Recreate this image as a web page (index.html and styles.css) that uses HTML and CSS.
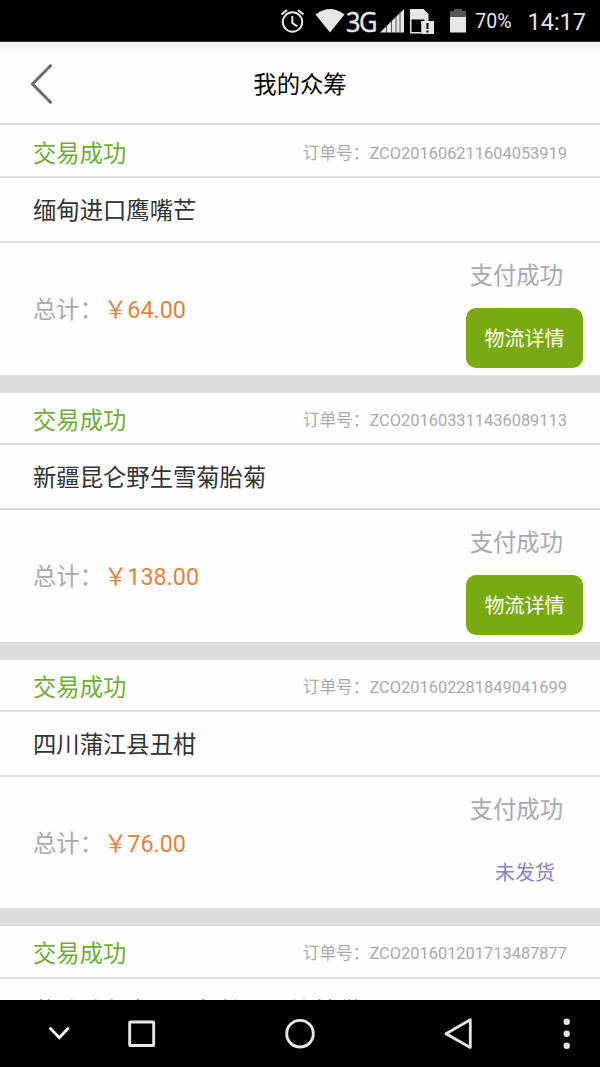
FILE: index.html
```html
<!DOCTYPE html>
<html lang="zh-CN">
<head>
<meta charset="utf-8">
<title>我的众筹</title>
<link rel="stylesheet" href="styles.css">
</head>
<body>
<div class="screen">
  <div class="status-bar">
    <svg class="status-icons" width="200" height="42" viewBox="270 0 200 42">
      <g fill="none" stroke="#e6e6e6" stroke-width="2">
        <circle cx="292.5" cy="22" r="9.7"/>
        <path d="M292.3 16v7l5 3.3"/>
        <path d="M281.5 14.5l5.5-4.5M303.5 14.5l-5.5-4.5" stroke-width="2.2"/>
      </g>
      <path d="M315.5 14.5Q330 3.500 344.500 14.500L330 32.500Z" fill="#e6e6e6"/>
      <path d="M380 32.500L404 9V32.500Z" fill="#e6e6e6"/>
      <path d="M386.500 24v9M391.500 20v13M396 15v18M400 11v22" stroke="#333" stroke-width=".8"/>
      <path d="M410 9h13.500l5 5v10h-7v9.500H410Z" fill="#e6e6e6"/>
      <path d="M411.500 19.500h13v2h-3.500v10.500h-9.500Z" fill="#000"/>
      <path d="M421.500 21h12.500v13h-12.500Z" fill="#e6e6e6"/>
      <path d="M427.500 23v6M427.500 30.500v2" stroke="#000" stroke-width="2"/>
      <path d="M454 9h8v2h4v6h-16v-6h4Z" fill="#555"/>
      <path d="M450 17h16v15.500h-16Z" fill="#e6e6e6"/>
    </svg>
    <span class="network">3G</span>
    <span class="battery">70%</span>
    <span class="clock">14:17</span>
  </div>

  <header class="title-bar">
    <svg class="back" width="24" height="42" viewBox="0 0 24 42"><path d="M20.500 2.700L2.500 21L20.500 39.300" fill="none" stroke="#6b6b6b" stroke-width="3" stroke-linecap="round"/></svg>
    <h1>我的众筹</h1>
  </header>

  <main class="orders">
    <section class="order">
      <div class="order-head"><span class="state">交易成功</span><span class="number">订单号：<b>ZCO201606211604053919</b></span></div>
      <div class="product">缅甸进口鹰嘴芒</div>
      <div class="summary">
        <div class="total">总计：<span class="price"><i>￥</i>64.00</span></div>
        <div class="payment"><span class="paid">支付成功</span><a class="button">物流详情</a></div>
      </div>
    </section>
    <section class="order">
      <div class="order-head"><span class="state">交易成功</span><span class="number">订单号：<b>ZCO201603311436089113</b></span></div>
      <div class="product">新疆昆仑野生雪菊胎菊</div>
      <div class="summary">
        <div class="total">总计：<span class="price"><i>￥</i>138.00</span></div>
        <div class="payment"><span class="paid">支付成功</span><a class="button">物流详情</a></div>
      </div>
    </section>
    <section class="order">
      <div class="order-head"><span class="state">交易成功</span><span class="number">订单号：<b>ZCO201602281849041699</b></span></div>
      <div class="product">四川蒲江县丑柑</div>
      <div class="summary">
        <div class="total">总计：<span class="price"><i>￥</i>76.00</span></div>
        <div class="payment"><span class="paid">支付成功</span><span class="unsent">未发货</span></div>
      </div>
    </section>
    <section class="order">
      <div class="order-head"><span class="state">交易成功</span><span class="number">订单号：<b>ZCO201601201713487877</b></span></div>
      <div class="product">花雕醉鱼来一百年特价厚块甘甜</div>
    </section>
  </main>

  <nav class="nav-bar">
    <svg width="600" height="67" viewBox="0 1000 600 67" fill="none" stroke="#e6e6e6">
      <path d="M50.500 1028.500L59.300 1037.800L68 1028.500" stroke="#fff" stroke-width="2.800" stroke-linecap="round"/>
      <rect x="129.700" y="1022" width="24" height="23.500" rx=".5" stroke-width="2.900"/>
      <circle cx="300" cy="1033.700" r="13.300" stroke-width="2.900"/>
      <path d="M470.300 1019.800V1047.500L446 1033.700Z" stroke-width="2.800" stroke-linejoin="round"/>
      <g fill="#e6e6e6" stroke="none"><circle cx="566.700" cy="1021.800" r="3.200"/><circle cx="566.700" cy="1033.800" r="3.200"/><circle cx="566.700" cy="1045.700" r="3.200"/></g>
    </svg>
  </nav>
</div>
</body>
</html>
```
FILE: styles.css
```css
* { box-sizing: border-box; }
body { margin: 0; font-family: Roboto, "Noto Sans CJK SC", sans-serif; background: #fff; }
.screen { width: 600px; height: 1067px; display: flex; flex-direction: column; overflow: hidden; }
.status-bar { position: relative; flex: 0 0 42px; display: flex; align-items: center; justify-content: flex-end; padding: 2px 14px 0 0; background: #000; color: #e6e6e6; border-bottom: 1px solid #333; }
.status-icons { position: absolute; left: 270px; top: 0; }
.network { position: absolute; left: 346px; top: 6px; font: 27px/32px "Open Sans", sans-serif; letter-spacing: -1.500px; transform: scaleX(.94); transform-origin: left; -webkit-text-stroke: .5px #e6e6e6; }
.battery { font-size: 19.500px; }
.clock { margin-left: 16px; font-size: 23.500px; }
.title-bar { position: relative; flex: 0 0 83px; display: flex; align-items: center; justify-content: center; padding-top: 4px; border-bottom: 2px solid #ddd; background: linear-gradient(#eee, #fdfdfd 12px, #fdfdfd); }
.title-bar h1 { margin: 0; font-size: 23.330px; font-weight: 400; line-height: 34px; color: #000; }
.back { position: absolute; left: 30px; top: 21px; }
.orders { flex: 1; min-height: 0; overflow: hidden; background: #fdfdfd; }
.order { height: 266.670px; border-bottom: 18px solid #ddd; }
.order:first-child { height: 268px; }
.order-head { height: 53px; display: flex; align-items: center; justify-content: space-between; padding: 2px 33px 0; border-bottom: 2px solid #ddd; }
.order + .order .order-head { height: 52.300px; }
.state { font-size: 23.330px; color: #71ac36; }
.number { font-size: 16.670px; color: #aaa; }
.number b { font-size: 16.420px; font-weight: 400; }
.product { height: 65px; padding: 0 33px; border-bottom: 2px solid #ddd; font-size: 23.330px; line-height: 66px; color: #333; }
.summary { height: 132px; display: flex; justify-content: space-between; padding: 16px 17px 7px 33px; }
.total { padding-top: 34px; font-size: 23.330px; line-height: 34px; color: #aaa; }
.price { margin-left: 1px; color: #e08442; }
.price i { font-style: normal; }
.payment { display: flex; flex-direction: column; align-items: flex-end; }
.paid { padding-right: 20px; font-size: 23.330px; line-height: 34px; color: #aaa; }
.button { width: 117px; height: 60px; margin-top: 15px; border-radius: 10px; background: #7aaa12; color: #fff; font-size: 20px; line-height: 62px; text-align: center; }
.unsent { padding-right: 28px; margin-top: 30px; font-size: 20px; line-height: 32px; color: #8983c4; }
.nav-bar { flex: 0 0 67px; background: #000; }
.nav-bar svg { display: block; }
```
